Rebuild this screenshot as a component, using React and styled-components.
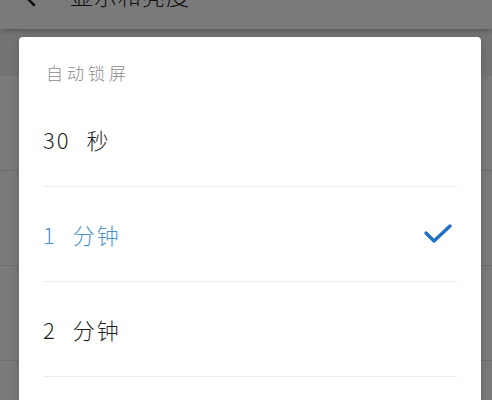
import React from 'react';
import styled, { createGlobalStyle } from 'styled-components';

const GlobalStyle = createGlobalStyle`
  html, body {
    margin: 0;
    padding: 0;
    height: 100%;
    overflow: hidden;
  }
  body {
    font-family: "Noto Sans CJK SC", "Noto Sans", sans-serif;
    background: #f4f4f4;
  }
`;

const Page = styled.div`
  position: relative;
  width: 492px;
  height: 400px;
  overflow: hidden;
  background: #f3f3f3;
`;

const Header = styled.div`
  height: 29px;
  background: #ffffff;
  display: flex;
  align-items: flex-end;
  padding: 0 22px;
  overflow: hidden;
  box-shadow: 0 2px 5px rgba(0, 0, 0, 0.25);
  position: relative;
  z-index: 1;
`;

const HeaderInner = styled.div`
  display: flex;
  align-items: center;
  gap: 34px;
  margin-bottom: 17px;
`;

const Title = styled.div`
  font-size: 23px;
  color: #222;
  letter-spacing: 1px;
  font-weight: 300;
`;

const BackList = styled.div`
  background: #ffffff;
  margin-top: 47px;
`;

const BackRow = styled.div`
  height: 94px;
  border-bottom: 1px solid #e6e6e6;
`;

const Overlay = styled.div`
  position: absolute;
  inset: 0;
  background: rgba(0, 0, 0, 0.52);
  z-index: 2;
`;

const Dialog = styled.div`
  position: absolute;
  left: 19px;
  top: 37px;
  width: 462px;
  height: 420px;
  background: #ffffff;
  border-radius: 4px;
  box-shadow: 0 2px 8px rgba(0, 0, 0, 0.2);
  padding: 24px 24px 0;
  box-sizing: border-box;
  z-index: 3;
`;

const DialogTitle = styled.div`
  height: 24px;
  line-height: 24px;
  margin-bottom: 7px;
  font-size: 17px;
  letter-spacing: 4px;
  color: #8c8c8c;
  font-weight: 300;
  padding-left: 3px;
`;

const Option = styled.div`
  height: 94px;
  border-bottom: 1px solid #ececec;
  display: flex;
  align-items: center;
  justify-content: space-between;
  font-size: 22px;
  font-weight: 300;
  letter-spacing: 2px;
  word-spacing: 9px;
  color: ${(p) => (p.$active ? '#4a93cf' : '#1e1e1e')};
`;

const Check = styled.svg`
  width: 30px;
  height: 22px;
  margin-right: 4px;
`;

const options = [
  { label: '30 秒' },
  { label: '1 分钟', active: true },
  { label: '2 分钟' },
];

export default function App() {
  return (
    <>
      <GlobalStyle />
      <Page>
        <Header>
          <HeaderInner>
            <svg width="14" height="24" viewBox="0 0 14 24">
              <path d="M12 2 L2 12 L12 22" fill="none" stroke="#222" strokeWidth="2.6" strokeLinecap="round" strokeLinejoin="round" />
            </svg>
            <Title>显示和亮度</Title>
          </HeaderInner>
        </Header>
        <BackList>
          <BackRow />
          <BackRow />
          <BackRow />
          <BackRow />
        </BackList>
        <Overlay />
        <Dialog>
          <DialogTitle>自动锁屏</DialogTitle>
          {options.map((o) => (
            <Option key={o.label} $active={o.active}>
              <span>{o.label}</span>
              {o.active && (
                <Check viewBox="0 0 30 22">
                  <path d="M3 10 L11 18 L27 3" fill="none" stroke="#1f6fc6" strokeWidth="3.4" strokeLinecap="round" strokeLinejoin="round" />
                </Check>
              )}
            </Option>
          ))}
        </Dialog>
      </Page>
    </>
  );
}
